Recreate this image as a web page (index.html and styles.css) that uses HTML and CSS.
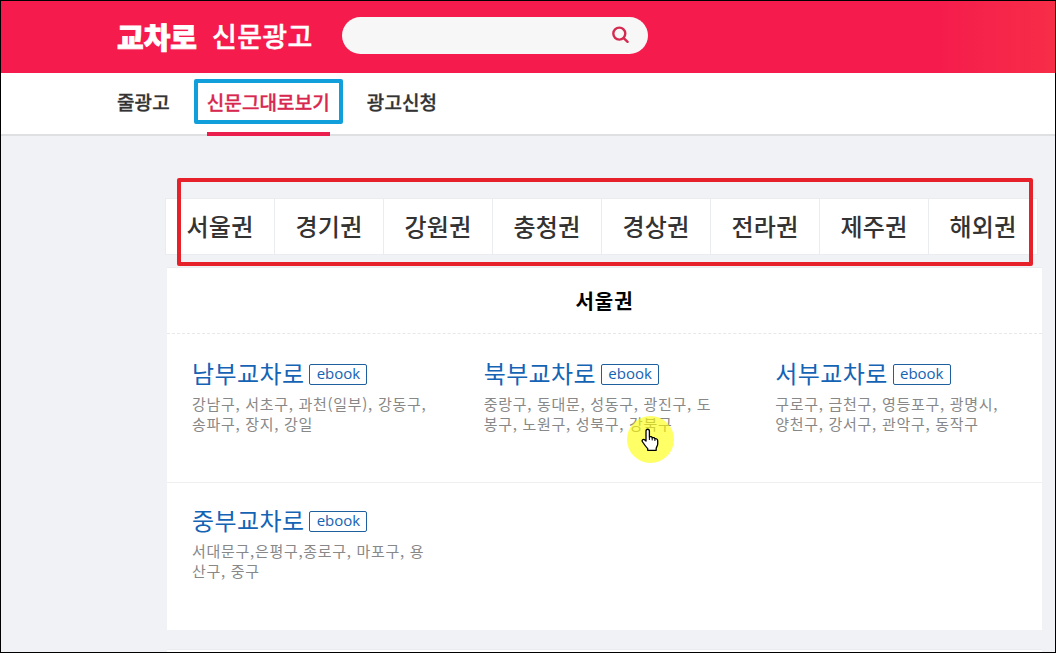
FILE: index.html
```html
<!DOCTYPE html>
<html lang="ko">
<head>
  <meta charset="UTF-8" />
  <meta name="viewport" content="width=device-width, initial-scale=1.0" />
  <title>교차로 신문광고</title>
  <link rel="stylesheet" href="styles.css">
</head>
<body>
  <header class="header">
    <h1 class="logo"><span class="logo-brand">교차로</span><span class="logo-sub">신문광고</span></h1>
    <form class="search-box">
      <input type="text" class="search-input" aria-label="검색" />
      <button type="button" class="search-btn" aria-label="검색">
        <svg width="18" height="18" viewBox="0 0 18 18" fill="none" stroke="#d52a50" stroke-width="2.4" stroke-linecap="round">
          <circle cx="7.3" cy="7.6" r="6" />
          <path d="M11.7 12.1L15.6 15.8" />
        </svg>
      </button>
    </form>
  </header>
  <nav class="nav">
    <a href="#" class="nav-link">줄광고</a>
    <a href="#" class="nav-link active">신문그대로보기<span class="mark-blue"></span></a>
    <a href="#" class="nav-link">광고신청</a>
  </nav>

  <main class="container">
    <div class="tabs">
      <a href="#" class="tab">서울권</a>
      <a href="#" class="tab">경기권</a>
      <a href="#" class="tab">강원권</a>
      <a href="#" class="tab">충청권</a>
      <a href="#" class="tab">경상권</a>
      <a href="#" class="tab">전라권</a>
      <a href="#" class="tab">제주권</a>
      <a href="#" class="tab">해외권</a>
      <span class="mark-red"></span>
    </div>

    <section class="panel">
      <h2 class="panel-title">서울권</h2>
      <div class="row">
        <div class="item">
          <h3><a href="#">남부교차로</a><a href="#" class="ebook">ebook</a></h3>
          <p>강남구, 서초구, 과천(일부), 강동구,<br>송파구, 장지, 강일</p>
        </div>
        <div class="item">
          <h3><a href="#">북부교차로</a><a href="#" class="ebook">ebook</a></h3>
          <p>중랑구, 동대문, 성동구, 광진구, 도<br>봉구, 노원구, 성북구, 강북구</p>
          <span class="pointer">
            <svg width="18" height="24" viewBox="0 0 18 24">
              <path d="M5 13V3.2C5 .6 8.4.6 8.4 3.2V9C9.4 8.2 11 8.6 11.2 9.8C12.2 9.2 13.6 9.7 13.9 10.8C15.2 10.4 16.7 11.2 16.7 12.7V16C16.7 18 15.2 19 15.2 20.5V22.3H6.7V20.6C5 18.9 3.2 16.4 1.6 14C.2 11.9 2.4 10.5 3.9 12Z" fill="#fff" stroke="#000" stroke-width="1.3" stroke-linejoin="round" />
              <path d="M8.4 9V12M11.2 9.8V12.4M13.9 10.8V13" stroke="#000" stroke-width="1" />
            </svg>
          </span>
        </div>
        <div class="item">
          <h3><a href="#">서부교차로</a><a href="#" class="ebook">ebook</a></h3>
          <p>구로구, 금천구, 영등포구, 광명시,<br>양천구, 강서구, 관악구, 동작구</p>
        </div>
      </div>
      <div class="row">
        <div class="item">
          <h3><a href="#">중부교차로</a><a href="#" class="ebook">ebook</a></h3>
          <p>서대문구,은평구,종로구, 마포구, 용<br>산구, 중구</p>
        </div>
      </div>
    </section>
    <section class="panel panel-next"></section>
  </main>
</body>
</html>
```

FILE: styles.css
```css
* { box-sizing: border-box; }
body {
  margin: 0;
  height: 653px;
  border: 1px solid #000;
  background: #f1f2f6;
  color: #333;
  font-family: "Noto Sans CJK KR", "Noto Sans", sans-serif;
}
a { color: inherit; text-decoration: none; }
h1, h2, h3, p { margin: 0; }

.header {
  display: flex;
  align-items: center;
  height: 72px;
  padding: 0 0 4px 116px;
  background: linear-gradient(to right, #f51b4d 0, #f51b4d 930px, #f72d47 100%);
}
.logo {
  display: flex;
  align-items: center;
  width: 225px;
  padding-top: 2px;
  color: #fff;
  white-space: nowrap;
}
.logo-brand {
  width: 95px;
  font-size: 29px;
  font-weight: 900;
  line-height: 40px;
  -webkit-text-stroke: 0.8px #fff;
}
.logo-sub {
  font-size: 27px;
  font-weight: 500;
  line-height: 40px;
  letter-spacing: 0.3px;
  -webkit-text-stroke: 0.4px #fff;
}
.search-box {
  display: flex;
  align-items: center;
  width: 306px;
  height: 37px;
  padding-right: 18px;
  border-radius: 19px;
  background: #f7f7f7;
}
.search-input {
  flex: 1;
  min-width: 0;
  padding: 0 18px;
  border: 0;
  outline: 0;
  background: none;
}
.search-btn {
  display: flex;
  padding: 0;
  border: 0;
  background: none;
}

.nav {
  display: flex;
  gap: 37px;
  height: 63px;
  padding-left: 116px;
  border-bottom: 2px solid #dfe0e2;
  background: #fff;
}
.nav-link {
  position: relative;
  height: 63px;
  font-size: 19px;
  font-weight: 500;
  line-height: 58px;
  letter-spacing: 0.1px;
  -webkit-text-stroke: 0.3px;
}
.nav-link.active {
  color: #d8284f;
  border-bottom: 4px solid #ea1f4e;
}
.mark-blue {
  position: absolute;
  left: -13px;
  top: 6px;
  width: 149px;
  height: 45px;
  border: 4px solid #119fdc;
  border-radius: 2px;
}

.container {
  width: 877px;
  margin: 62px 0 0 164px;
}
.tabs {
  position: relative;
  display: flex;
  width: 873px;
  height: 57px;
  border: 1px solid #ebecef;
  background: #fff;
}
.tab {
  flex: 1;
  border-right: 1px solid #ebecef;
  font-size: 24px;
  font-weight: 500;
  line-height: 53px;
  letter-spacing: 0.3px;
  text-align: center;
}
.tab:nth-child(8) { border-right: 0; }
.mark-red {
  position: absolute;
  left: 11px;
  top: -21px;
  width: 856px;
  height: 88px;
  border: 4px solid #e62129;
  border-radius: 2px;
}

.panel {
  width: 875px;
  height: 363px;
  margin: 12px 0 0 2px;
  border-top: 1px solid #ebecef;
  background: #fff;
}
.panel-next {
  height: 3px;
  margin-top: 19px;
}
.panel-title {
  height: 66px;
  border-bottom: 1px dashed #e8e8e8;
  color: #000;
  font-size: 20px;
  font-weight: 700;
  line-height: 65px;
  letter-spacing: 1px;
  text-align: center;
}
.row {
  display: grid;
  grid-template-columns: repeat(3, 1fr);
  height: 148px;
}
.row + .row { border-top: 1px solid #f0f0f0; }
.row + .row .item { padding-top: 22px; }
.item {
  position: relative;
  padding: 24px 0 0 25px;
  white-space: nowrap;
}
.item h3 {
  display: flex;
  align-items: center;
  gap: 5px;
  height: 32px;
  color: #1463b4;
  font-size: 24px;
  font-weight: 400;
  line-height: 30px;
  letter-spacing: 0.4px;
}
.item h3 a:first-child { margin-top: -3px; }
.ebook {
  width: 58px;
  height: 21px;
  border: 1px solid #1d5f9f;
  border-radius: 2px;
  font-family: "Open Sans", sans-serif;
  font-size: 15px;
  line-height: 17px;
  letter-spacing: 0;
  text-align: center;
}
.item p {
  margin-top: 4px;
  color: #888;
  font-size: 15px;
  line-height: 20px;
  letter-spacing: 0.7px;
}

/* mouse pointer with its click highlight */
.pointer {
  position: absolute;
  left: 168px;
  top: 82px;
  display: flex;
  align-items: center;
  justify-content: center;
  width: 47px;
  height: 47px;
  border-radius: 50%;
  background: rgba(255, 255, 0, 0.6);
}
```
